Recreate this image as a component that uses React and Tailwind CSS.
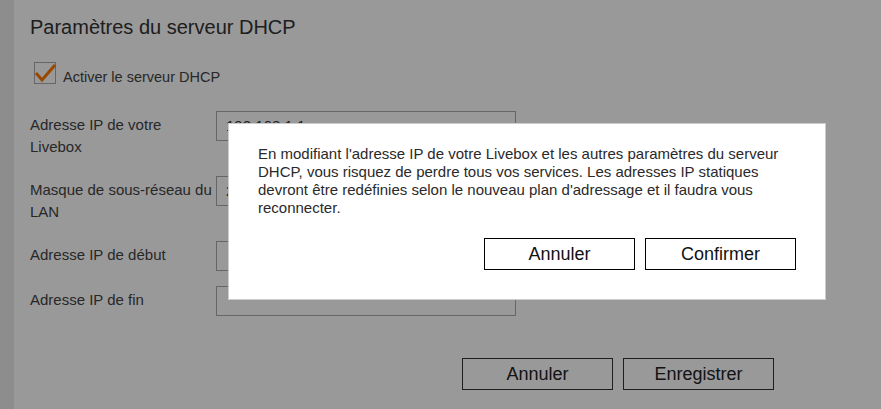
const fields = [
  { label: "Adresse IP de votre Livebox", value: "192.168.1.1" },
  { label: "Masque de sous-réseau du LAN", value: "255.255.255.0" },
  { label: "Adresse IP de début", value: "" },
  { label: "Adresse IP de fin", value: "" },
];

const App = () => {
  return (
    <div
      className="relative flex h-screen overflow-hidden bg-white text-[#333]"
      style={{ fontFamily: '"Liberation Sans", Arial, sans-serif' }}
    >
      <div className="w-[14px] shrink-0 bg-[#ececec]" />

      <div className="flex w-[760px] flex-col pl-4">
        <h1 className="mt-[15px] text-[20px] leading-6 text-[#333]">
          Paramètres du serveur DHCP
        </h1>

        <label className="mt-[23px] flex items-end">
          <span className="relative ml-1 h-[22px] w-[22px] shrink-0 border border-[#aaa] bg-white">
            <svg
              viewBox="0 0 22 22"
              className="absolute -left-px -top-px h-[22px] w-[22px]"
              fill="none"
              stroke="#ff7900"
              strokeWidth="3"
            >
              <path d="M2 11l6 7L21 3" />
            </svg>
          </span>
          <span className="ml-[7px] text-[14.5px] leading-[14px] text-[#444]">
            Activer le serveur DHCP
          </span>
        </label>

        <div className="mt-[27px] flex flex-col">
          {fields.map((field) => (
            <div key={field.label} className="mb-[15px] flex items-start">
              <div className="w-[186px] py-[3px] text-[15px] leading-[22px] text-[#444]">
                {field.label}
              </div>
              <div className="flex h-[30px] w-[300px] items-center border border-[#aaa] bg-white px-[9px] text-[15px] text-[#333]">
                {field.value}
              </div>
            </div>
          ))}
        </div>

        <div className="mt-[27px] flex justify-end gap-[10px]">
          <button className="h-[32px] w-[151px] border border-[#333] bg-white text-[18px] text-[#222]">
            Annuler
          </button>
          <button className="h-[32px] w-[151px] border border-[#333] bg-white text-[18px] text-[#222]">
            Enregistrer
          </button>
        </div>
      </div>

      <div className="absolute inset-0 bg-black/40" />

      <div className="absolute left-[228px] top-[123px] w-[598px] border border-[#ccc] bg-white px-[29px] pb-[29px] pt-[21px]">
        <p className="text-[15px] leading-[18px] text-[#2a2a2a]">
          En modifiant l'adresse IP de votre Livebox et les autres paramètres du
          serveur DHCP, vous risquez de perdre tous vos services. Les adresses IP
          statiques devront être redéfinies selon le nouveau plan d'adressage et
          il faudra vous reconnecter.
        </p>
        <div className="mt-[21px] flex justify-end gap-[10px]">
          <button className="h-[32px] w-[151px] border border-black bg-white text-[18px] text-[#111]">
            Annuler
          </button>
          <button className="h-[32px] w-[151px] border border-black bg-white text-[18px] text-[#111]">
            Confirmer
          </button>
        </div>
      </div>
    </div>
  );
};

export default App;
